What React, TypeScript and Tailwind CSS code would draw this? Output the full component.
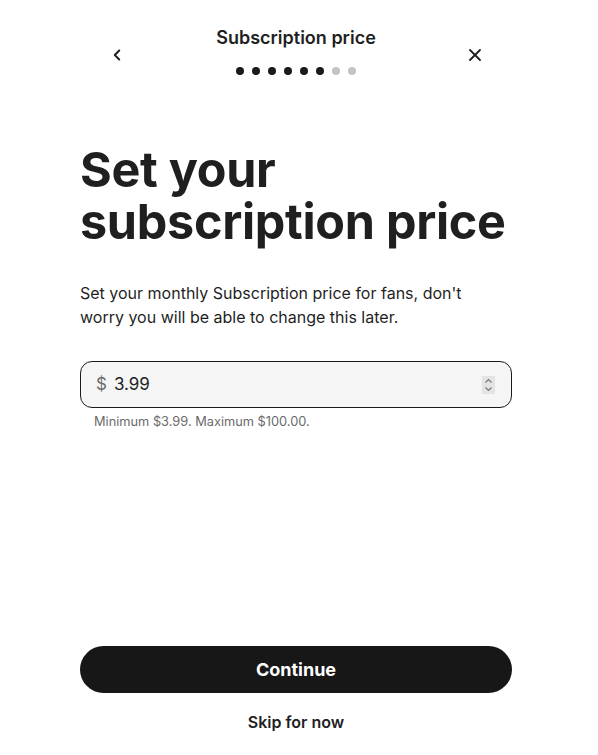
import { ChevronLeft, X } from "lucide-react";

const steps = [1, 1, 1, 1, 1, 1, 0, 0];

export default function App() {
  return (
    <div
      className="min-h-screen bg-white text-[#1f1f1f] flex flex-col"
      style={{ fontFamily: "Inter, 'Noto Sans', sans-serif" }}
    >
      <div className="w-[432px] ml-[80px] flex flex-col min-h-[755px]">
        {/* Header */}
        <div className="relative pt-[26px] flex flex-col items-center">
          <button className="absolute left-[28px] top-[46px] p-0">
            <ChevronLeft size={18} strokeWidth={2.6} />
          </button>
          <button className="absolute right-[27px] top-[45px] p-0">
            <X size={20} strokeWidth={2.2} />
          </button>
          <h2 className="text-[18px] leading-[24px] font-semibold">Subscription price</h2>
          <div className="flex gap-[8px] mt-[17px]">
            {steps.map((s, i) => (
              <span
                key={i}
                className={`w-[8px] h-[8px] rounded-full ${s ? "bg-[#1a1a1a]" : "bg-[#c4c4c4]"}`}
              />
            ))}
          </div>
        </div>

        {/* Body */}
        <h1 className="mt-[69px] text-[48.5px] leading-[52px] font-bold tracking-[-0.3px]">
          Set your subscription price
        </h1>
        <p className="mt-[33px] pr-[12px] text-[16px] leading-[24px]">
          Set your monthly Subscription price for fans, don't worry you will be able to change this later.
        </p>

        <div className="mt-[32px] h-[47px] rounded-[12px] border border-[#1a1a1a] bg-[#f5f5f5] flex items-center pl-[15px] pr-[16px]">
          <span className="text-[17px] text-[#6b6b6b]">$</span>
          <span className="ml-[7px] text-[17px]">3.99</span>
          <span className="ml-auto w-[13px] h-[18px] bg-[#e4e4e4] flex flex-col items-center justify-center">
            <svg width="9" height="16" viewBox="0 0 9 16" fill="none" stroke="#777" strokeWidth="1.2">
              <path d="M1.5 5.5 L4.5 2.5 L7.5 5.5" />
              <path d="M1.5 10.5 L4.5 13.5 L7.5 10.5" />
            </svg>
          </span>
        </div>
        <p className="mt-[5px] pl-[14px] text-[12.8px] leading-[18px] text-[#6b6b6b]">
          Minimum $3.99. Maximum $100.00.
        </p>

        <div className="flex-1" />

        <button className="h-[47px] rounded-full bg-[#171717] text-white text-[18px] font-bold">
          Continue
        </button>
        <button className="mt-[17px] mb-[21px] text-[16px] leading-[24px] font-semibold">
          Skip for now
        </button>
      </div>
    </div>
  );
}
